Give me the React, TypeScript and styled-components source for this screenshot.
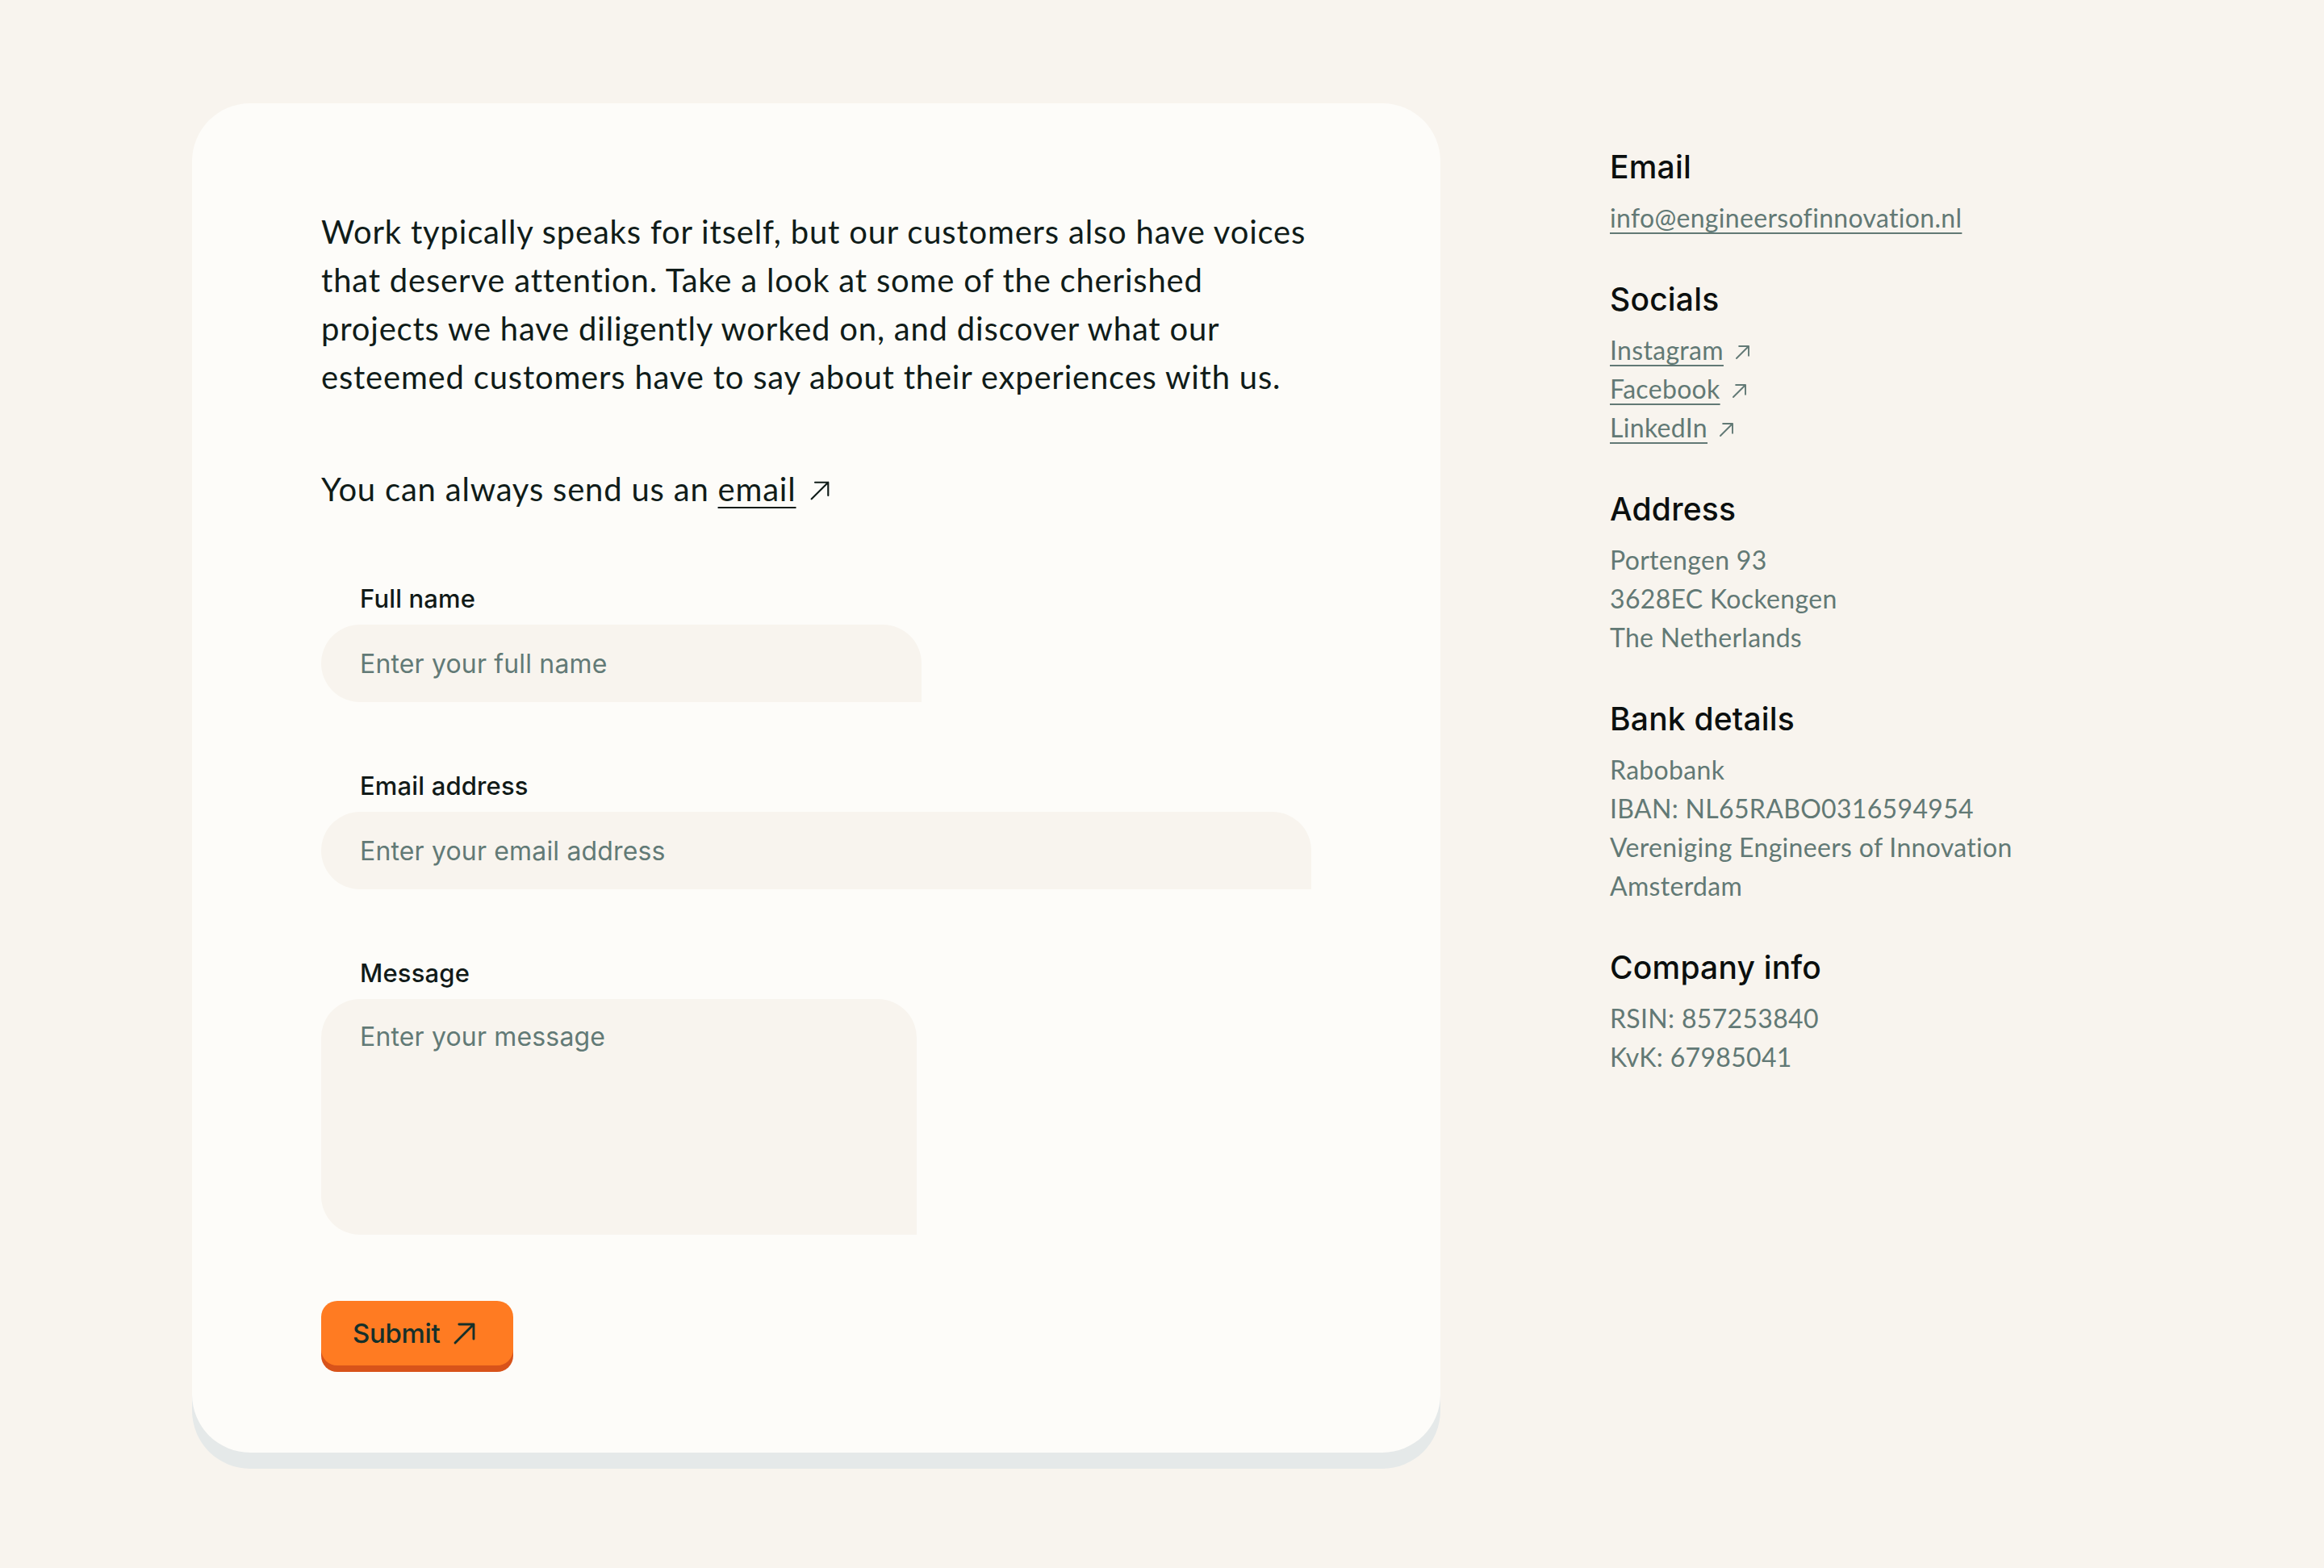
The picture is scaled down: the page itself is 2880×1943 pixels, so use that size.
import React from "react";
import styled, { createGlobalStyle } from "styled-components";

const Global = createGlobalStyle`
  html, body { margin: 0; padding: 0; background: #f8f4ee; }
  * { box-sizing: border-box; }
`;

const Page = styled.div`
  display: flex;
  align-items: flex-start;
  gap: 210px;
  min-height: 100vh;
  padding: 128px 0 126px 238px;
  background: #f8f4ee;
`;

const Card = styled.section`
  flex: 0 0 1547px;
  background: #fdfcf9;
  border-radius: 72px;
  box-shadow: 0 20px 0 #e5e9e9;
  padding: 129px 160px 108px;
`;

const Intro = styled.p`
  margin: 0;
  font-family: Lato, "Open Sans", sans-serif;
  font-size: 40px;
  line-height: 60px;
  color: #101c19;
  letter-spacing: 0.02em;
`;

const Lead = styled(Intro)`
  margin-top: 79px;
`;

const InlineLink = styled.a`
  color: #101c19;
  text-decoration: underline;
  text-decoration-thickness: 2px;
  text-underline-offset: 7px;
`;

const Arrow = styled.svg<{ $size: number; $gap: number; $stroke: string }>`
  width: ${(p) => p.$size}px;
  height: ${(p) => p.$size}px;
  margin-left: ${(p) => p.$gap}px;
  vertical-align: baseline;
  stroke: ${(p) => p.$stroke};
  fill: none;
  stroke-linecap: round;
  stroke-linejoin: round;
  flex: none;
`;

const Form = styled.form`
  display: flex;
  flex-direction: column;
  gap: 86px;
  margin-top: 88px;
`;

const Field = styled.label`
  display: flex;
  flex-direction: column;
  gap: 14px;
`;

const LabelText = styled.span`
  padding-left: 48px;
  font-family: Inter, sans-serif;
  font-weight: 500;
  font-size: 31px;
  line-height: 36px;
  letter-spacing: 0.005em;
  color: #111a18;
`;

const controlStyles = `
  border: none;
  outline: none;
  background: #f8f4ee;
  font-family: Inter, sans-serif;
  font-size: 32px;
  letter-spacing: 0.005em;
  color: #111a18;
  padding-left: 48px;
  &::placeholder { color: #627a76; opacity: 1; }
`;

const Input = styled.input<{ $width: number }>`
  ${controlStyles}
  width: ${(p) => p.$width}px;
  height: 96px;
  border-radius: 48px 48px 0 48px;
`;

const TextArea = styled.textarea`
  ${controlStyles}
  width: 738px;
  height: 292px;
  padding-top: 27px;
  line-height: 40px;
  border-radius: 48px 48px 0 48px;
  resize: none;
`;

const SubmitButton = styled.button`
  align-self: flex-start;
  display: inline-flex;
  align-items: center;
  gap: 16px;
  height: 80px;
  margin-top: -4px;
  padding: 0 46px 0 39px;
  border: none;
  border-radius: 20px;
  background: #ff7b22;
  box-shadow: 0 8px 0 #d8531a;
  font-family: Inter, sans-serif;
  font-weight: 500;
  font-size: 33px;
  letter-spacing: -0.01em;
  color: #15302a;
  cursor: pointer;
`;

const Aside = styled.aside`
  width: 620px;
  margin-top: 57px;
  display: flex;
  flex-direction: column;
  gap: 55px;
`;

const InfoBlock = styled.div`
  display: flex;
  flex-direction: column;
`;

const InfoTitle = styled.h3`
  margin: 0 0 17px;
  font-family: Inter, sans-serif;
  font-weight: 500;
  font-size: 39px;
  line-height: 44px;
  letter-spacing: 0.005em;
  color: #0b0f0e;
`;

const InfoLine = styled.div`
  font-family: Lato, "Open Sans", sans-serif;
  font-size: 32px;
  line-height: 48px;
  color: #627975;
  letter-spacing: 0.01em;
`;

const InfoLink = styled.a`
  color: #627975;
  text-decoration: underline;
  text-decoration-thickness: 2px;
  text-underline-offset: 6px;
`;

const ArrowIcon = ({ size, gap, stroke, width }: { size: number; gap: number; stroke: string; width: number }) => (
  <Arrow $size={size} $gap={gap} $stroke={stroke} viewBox="0 0 24 24" strokeWidth={width}>
    <path d="M2.5 21.5 L21.5 2.5 M6.5 2.5 H21.5 V17.5" />
  </Arrow>
);

export default function App() {
  return (
    <>
      <Global />
      <Page>
        <Card>
          <Intro>
            Work typically speaks for itself, but our customers also have voices
            <br />
            that deserve attention. Take a look at some of the cherished
            <br />
            projects we have diligently worked on, and discover what our
            <br />
            esteemed customers have to say about their experiences with us.
          </Intro>
          <Lead>
            You can always send us an <InlineLink href="#">email</InlineLink>
            <ArrowIcon size={26} gap={16} stroke="#101c19" width={2} />
          </Lead>
          <Form onSubmit={(e) => e.preventDefault()}>
            <Field>
              <LabelText>Full name</LabelText>
              <Input $width={744} type="text" placeholder="Enter your full name" />
            </Field>
            <Field>
              <LabelText>Email address</LabelText>
              <Input $width={1227} type="email" placeholder="Enter your email address" />
            </Field>
            <Field>
              <LabelText>Message</LabelText>
              <TextArea placeholder="Enter your message" />
            </Field>
            <SubmitButton type="submit">
              Submit
              <ArrowIcon size={29} gap={0} stroke="#15302a" width={2.4} />
            </SubmitButton>
          </Form>
        </Card>
        <Aside>
          <InfoBlock>
            <InfoTitle>Email</InfoTitle>
            <InfoLine>
              <InfoLink href="#">info@engineersofinnovation.nl</InfoLink>
            </InfoLine>
          </InfoBlock>
          <InfoBlock>
            <InfoTitle>Socials</InfoTitle>
            {["Instagram", "Facebook", "LinkedIn"].map((s) => (
              <InfoLine key={s}>
                <InfoLink href="#">{s}</InfoLink>
                <ArrowIcon size={19} gap={14} stroke="#627975" width={2.4} />
              </InfoLine>
            ))}
          </InfoBlock>
          <InfoBlock>
            <InfoTitle>Address</InfoTitle>
            <InfoLine>Portengen 93</InfoLine>
            <InfoLine>3628EC Kockengen</InfoLine>
            <InfoLine>The Netherlands</InfoLine>
          </InfoBlock>
          <InfoBlock>
            <InfoTitle>Bank details</InfoTitle>
            <InfoLine>Rabobank</InfoLine>
            <InfoLine>IBAN: NL65RABO0316594954</InfoLine>
            <InfoLine>Vereniging Engineers of Innovation</InfoLine>
            <InfoLine>Amsterdam</InfoLine>
          </InfoBlock>
          <InfoBlock>
            <InfoTitle>Company info</InfoTitle>
            <InfoLine>RSIN: 857253840</InfoLine>
            <InfoLine>KvK: 67985041</InfoLine>
          </InfoBlock>
        </Aside>
      </Page>
    </>
  );
}
